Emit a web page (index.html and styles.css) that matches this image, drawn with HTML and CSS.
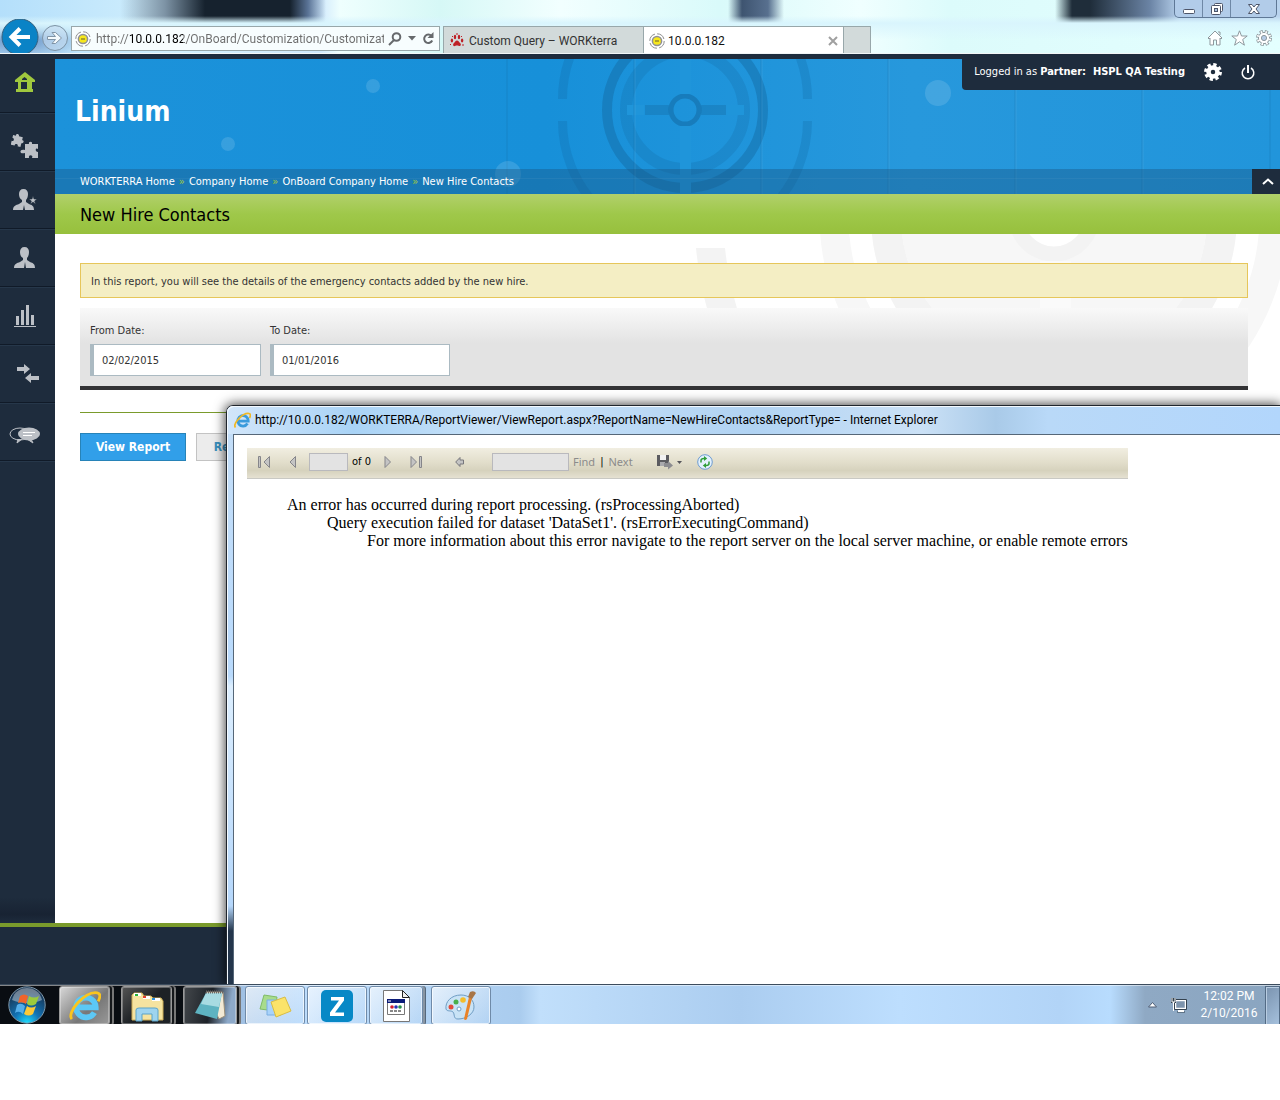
FILE: index.html
```html
<!DOCTYPE html>
<html lang="en">
<head>
<meta charset="utf-8">
<title>New Hire Contacts</title>
<link rel="stylesheet" href="styles.css">
</head>
<body>
<div class="desktop">
  <header class="chrome">
    <div class="window-buttons">
      <button aria-label="Minimize"><svg width="14" height="12" viewBox="0 0 14 12"><rect x="1.500" y="6.500" width="11" height="4" rx="1" fill="#fff" stroke="#4d5569"/></svg></button>
      <button aria-label="Restore"><svg width="14" height="14" viewBox="0 0 14 14" fill="#fff" stroke="#4d5569"><rect x="4.500" y="1.500" width="8" height="8" rx="1"/><rect x="1.500" y="3.500" width="9" height="9" rx="1"/><rect x="4.500" y="6.500" width="3" height="3" fill="#a9c3e0"/></svg></button>
      <button class="wide" aria-label="Close"><svg width="14" height="12" viewBox="0 0 14 12"><path d="M1.500 1.500h3.500l2 2.500 2-2.500h3.500L9 6l3.500 4.500H9L7 8l-2 2.500H1.500L5 6z" fill="#fff" stroke="#4d5569"/></svg></button>
    </div>
    <div class="nav-row">
      <button class="back" aria-label="Back"><svg width="40" height="36" viewBox="0 0 40 36"><circle cx="20" cy="18" r="18" fill="#0a83c6" stroke="#35617f"/><path d="M30 18H13M20 9.500L11.500 18l8.500 8.500" fill="none" stroke="#fff" stroke-width="4"/></svg></button>
      <button class="forward" aria-label="Forward"><svg width="28" height="28" viewBox="0 0 28 28"><circle cx="14" cy="14" r="12.500" fill="#c7dcf0" fill-opacity=".6" stroke="#7d93a5"/><path d="M6.500 12.500h8L11 8.500h3.500L20.500 14l-6 5.500H11l3.500-4h-8z" fill="#f4fafd" stroke="#8094a6"/></svg></button>
      <form class="address">
        <svg width="16" height="16" viewBox="0 0 16 16"><circle cx="8" cy="8" r="7.200" fill="#fff" stroke="#8b8b8b" stroke-dasharray="9 2.300"/><circle cx="8" cy="8" r="4.600" fill="#f6e71c" stroke="#8f9097" stroke-width="1.500"/><path d="M6 8h4" stroke="#94882a" stroke-width="1.500"/></svg>
        <input class="url" type="text" aria-label="Address" value="http://10.0.0.182/OnBoard/Customization/Customizati">
        <button type="button" aria-label="Search"><svg width="14" height="14" viewBox="0 0 14 14" fill="none" stroke="#66696c" stroke-width="2"><circle cx="8.500" cy="5" r="3.800"/><path d="M6 8l-5 5"/></svg></button>
        <button type="button" aria-label="Show suggestions"><svg width="8" height="5" viewBox="0 0 8 5"><path d="M0 0h8L4 4.500z" fill="#66696c"/></svg></button>
        <button type="button" aria-label="Refresh"><svg width="12" height="13" viewBox="0 0 12 13"><path d="M9.500 4A4.200 4.200 0 1 0 10.200 8.500" fill="none" stroke="#66696c" stroke-width="2"/><path d="M11.500 0v6H5.500z" fill="#66696c"/></svg></button>
      </form>
      <div class="tabs">
        <button class="tab"><svg width="14" height="15" viewBox="0 0 14 15" fill="#be2026"><path d="M7 7.500c1.500 0 2 1.500 3.500 3 1 1.500 0 3-1.500 2.500-1.500-.6-2.500-.6-4 0s-2.500-1-1.500-2.500C5 9 5.500 7.500 7 7.500z"/><ellipse cx="5" cy="4" rx="1.200" ry="2.200"/><ellipse cx="9" cy="4" rx="1.200" ry="2.200"/><ellipse cx="1.900" cy="7.500" rx="1.200" ry="1.900"/><ellipse cx="12.100" cy="7.500" rx="1.200" ry="1.900"/><path d="M6.500 0h1v2h-1zM2 3h1v1H2zM11 3h1v1h-1zM0 11h1v1H0zM12.500 11h1v2h-1z"/></svg><span>Custom Query – WORKterra</span></button>
        <button class="tab current"><svg width="16" height="16" viewBox="0 0 16 16"><circle cx="8" cy="8" r="7.200" fill="#fff" stroke="#8b8b8b" stroke-dasharray="9 2.300"/><circle cx="8" cy="8" r="4.600" fill="#f6e71c" stroke="#8f9097" stroke-width="1.500"/><path d="M6 8h4" stroke="#94882a" stroke-width="1.500"/></svg><span>10.0.0.182</span><svg class="tab-close" width="10" height="10" viewBox="0 0 10 10"><path d="M1 1l8 8M9 1L1 9" stroke="#a0a0a0" stroke-width="2"/></svg></button>
        <button class="tab new" aria-label="New tab"></button>
      </div>
      <div class="tools">
        <button aria-label="Home"><svg width="16" height="16" viewBox="0 0 16 16"><path d="M8 1l7 7-1 1-1-1v7H9.500v-5h-3v5H3V8L2 9 1 8zM11 2h2v3" fill="#fff" stroke="#8e999e"/></svg></button>
        <button aria-label="Favorites"><svg width="17" height="16" viewBox="0 0 17 16"><path d="M8.500.8l2 5.200h5.700l-4.500 3.500 1.700 5.700-4.900-3.400-4.900 3.400 1.700-5.700L.8 6h5.700z" fill="#fff" stroke="#8e999e"/></svg></button>
        <button aria-label="Tools"><svg width="16" height="16" viewBox="0 0 16 16"><circle cx="8" cy="8" r="6.200" fill="none" stroke="#8e999e" stroke-width="3.600" stroke-dasharray="3 1.870"/><circle cx="8" cy="8" r="5.600" fill="#fff" stroke="#8e999e"/><circle cx="8" cy="8" r="6" fill="none" stroke="#fff" stroke-width="2.600" stroke-dasharray="1.500 3.212" stroke-dashoffset="-.75"/><circle cx="8" cy="8" r="2.600" fill="#b5cbe6" stroke="#8e999e"/></svg></button>
      </div>
    </div>
  </header>

  <div class="app">
    <nav class="sidebar" aria-label="Main">
      <a class="high" href="#home" aria-label="Home"><svg width="20" height="20" viewBox="0 0 20 20" fill="#a0c83e" fill-rule="evenodd"><path d="M10 0l10 8v2h-3v7h1v3H1v-3h2v-7H0V8zM6 10v7h6v-7zM7 7v1h5V7l-2.500-2z"/></svg></a>
      <a class="low" href="#modules" aria-label="Modules"><svg width="28" height="26" viewBox="0 0 28 26" fill="#bcc0c6"><g transform="rotate(14 6 7)"><path d="M1 3h3c-1-2 3-3 3 0h4v3c2-1 3 3 0 3v4H8c1-2-3-3-3 0H1V9c2 1 3-3 0-3z"/></g><path d="M14 11h4c-1-3 4-3 3 0h6v5c-2-2-4 2 0 3v6h-6c2-3-4-4-3 0h-4v-5c-6 2-6-5 0-3z"/></svg></a>
      <a href="#partner" aria-label="Partner"><svg width="24" height="21" viewBox="0 0 24 21" fill="#bcc0c6"><path d="M10.500 0c3 0 4.500 2 4.500 5s-1 5-2 6v2l3 2c3 1 5 2 5 6h-9l-1-5-1 5H0c0-4 3-5 6-6l3-2v-2C7 10 6 8 6 5s1.500-5 4.500-5z"/><path d="M20 7l1 3h3l-2.400 2 1 3-2.600-2-2.600 2 1-3L16 10h3z" stroke="#1e2c3d" stroke-width=".5"/></svg></a>
      <a href="#employee" aria-label="Employee"><svg width="22" height="21" viewBox="0 0 22 21" fill="#bcc0c6"><path d="M10.500 0C13.500 0 15 2 15 5s-1 5-2 6v2l3 2c3 1 5 2 5 6h-9l-1-6-1 6H0c0-4 3-5 6-6l3-2v-2C7 10 6 8 6 5s1.500-5 4.500-5z"/></svg></a>
      <a href="#reports" aria-label="Reports"><svg width="22" height="22" viewBox="0 0 22 22" fill="#bcc0c6"><path d="M2 11h3v9H2zM7 5h3v15H7zM12 0h3v20h-3zM17 10h3v10h-3zM0 21h22v1H0z"/></svg></a>
      <a class="shift" href="#transfer" aria-label="Transfer"><svg width="22" height="19" viewBox="0 0 22 19" fill="#bcc0c6"><path d="M0 3h7V0l6 5-6 5V7H0zM22 12h-8V9l-6 5 6 5v-3h8z"/></svg></a>
      <a class="low" href="#messages" aria-label="Messages"><svg width="32" height="17" viewBox="0 0 32 17"><ellipse cx="11" cy="7" rx="10" ry="6" fill="none" stroke="#bcc0c6"/><path d="M9 12l-1 4 5-4M22 12l2 4-6-4z" fill="#bcc0c6" stroke="#bcc0c6"/><ellipse cx="20" cy="7" rx="11" ry="6.500" fill="#bcc0c6"/><path d="M14 5.500h12M14 8.500h9" stroke="#fff"/></svg></a>
    </nav>

    <main class="page">
      <div class="hero">
        <svg class="hero-art" width="1225" height="135" viewBox="55 59 1225 135" aria-hidden="true">
          <g fill="none" stroke="#12669d">
            <g stroke-opacity=".24" stroke-width="9">
              <path d="M562.500 99A122 122 0 0 1 807.500 99"/><path d="M562.500 121A122 122 0 0 0 807.500 121"/>
            </g>
            <circle cx="685" cy="110" r="59" stroke-opacity=".22" stroke-width="12"/>
            <circle cx="685" cy="110" r="78" stroke-opacity=".42" stroke-width="10"/>
            <path d="M645 110h24M701 110h25" stroke-opacity=".32" stroke-width="10"/>
            <circle cx="685" cy="110" r="14" stroke-opacity=".5" stroke-width="5"/>
          </g>
          <path d="M680 59h11v35h-11zM680 126h11v68h-11zM627 105h17v10h-17zM727 105h17v10h-17z" fill="#1f95da"/>
          <path d="M507 59v135M634 59v135M761 59v135M888 59v135M1015 59v135M1142 59v135M1270 59v135" stroke="#0e5f99" stroke-opacity=".25"/>
          <path d="M635 59v135M762 59v135M889 59v135M1016 59v135M1143 59v135M55 178.500h1225" stroke="#8fd0f5" stroke-opacity=".16"/>
          <g fill="#fff" fill-opacity=".13"><circle cx="373" cy="86" r="7"/><circle cx="228" cy="144" r="7"/><circle cx="508" cy="174" r="13"/><circle cx="938" cy="93" r="13"/></g>
        </svg>
        <div class="account">
          <span>Logged in as <b>Partner:&nbsp; HSPL QA Testing</b></span>
          <button aria-label="Settings"><svg width="18" height="18" viewBox="0 0 18 18"><circle cx="9" cy="9" r="7.200" fill="none" stroke="#fff" stroke-width="3.500" stroke-dasharray="3.200 2.455"/><circle cx="9" cy="9" r="4.500" fill="none" stroke="#fff" stroke-width="4.500"/></svg></button>
          <button aria-label="Log out"><svg width="14" height="16" viewBox="0 0 14 16" fill="none" stroke="#fff"><path d="M4 4a5.800 5.800 0 1 0 6 0" stroke-width="1.500"/><path d="M7 1v8" stroke-width="2"/></svg></button>
        </div>
        <h1>Linium</h1>
        <div class="crumbs">
          <nav aria-label="Breadcrumb"><a href="#w">WORKTERRA Home</a><i>»</i><a href="#c">Company Home</a><i>»</i><a href="#o">OnBoard Company Home</a><i>»</i><a href="#n">New Hire Contacts</a></nav>
          <button class="collapse" aria-label="Collapse header"><svg width="12" height="8" viewBox="0 0 12 8"><path d="M1 6l5-4.500L11 6" fill="none" stroke="#fff" stroke-width="2"/></svg></button>
        </div>
      </div>
      <h2>New Hire Contacts</h2>
      <section class="content">
        <svg class="content-art" width="600" height="156" viewBox="680 234 600 156" fill="none" aria-hidden="true">
          <circle cx="1054" cy="216" r="153" fill="#f7f7f7"/>
          <circle cx="1054" cy="216" r="168" stroke="#f3f3f3" stroke-width="30"/>
          <circle cx="1054" cy="216" r="220" stroke="#f7f7f7" stroke-width="29"/>
          <path d="M696 248a358 358 0 0 0 108 224l20-21A329 329 0 0 1 725 248z" fill="#f3f3f3"/>
          <circle cx="1054" cy="216" r="38" fill="#fff" stroke="#f3f3f3" stroke-width="15"/>
          <path d="M1040 261h31v129h-31z" fill="#fafafa"/>
        </svg>
        <p class="notice">In this report, you will see the details of the emergency contacts added by the new hire.</p>
        <form>
          <div class="filters">
            <label>From Date:<input type="text" value="02/02/2015"></label>
            <label>To Date:<input type="text" value="01/01/2016"></label>
          </div>
          <div class="actions">
            <button class="primary" type="button">View Report</button>
            <button class="secondary" type="reset">Reset</button>
          </div>
        </form>
      </section>
    </main>
    <footer></footer>

    <section class="popup" aria-label="Report viewer window">
      <div class="popup-title">
        <svg width="17" height="17" viewBox="0 0 34 34"><path d="M27 23a10.500 10.500 0 1 1 1.500-5H8" fill="none" stroke="#3a9bdc" stroke-width="5.500"/><path d="M3 31C-3 24 17 1 30 3c5 1 2 7 1 9" fill="none" stroke="#f0b824" stroke-width="3.500"/></svg>
        <span>http://10.0.0.182/WORKTERRA/ReportViewer/ViewReport.aspx?ReportName=NewHireContacts&amp;ReportType= - Internet Explorer</span>
      </div>
      <div class="popup-body">
        <div class="report">
          <div class="toolbar">
            <button aria-label="First page"><svg width="13" height="12" viewBox="0 0 13 12" fill="#c4c4c4" stroke="#85858a"><path d="M.5.500h2v11h-2zM11.500.500v11L6 6z"/></svg></button>
            <button aria-label="Previous page"><svg width="8" height="12" viewBox="0 0 8 12" fill="#c4c4c4" stroke="#85858a"><path d="M6.500.500v11L1 6z"/></svg></button>
            <input class="page-no" type="text" aria-label="Page number" disabled>
            <span class="of">of 0</span>
            <button aria-label="Next page"><svg width="8" height="12" viewBox="0 0 8 12" fill="#c4c4c4" stroke="#85858a"><path d="M1 .500v11L6.500 6z"/></svg></button>
            <button class="last" aria-label="Last page"><svg width="13" height="12" viewBox="0 0 13 12" fill="#c4c4c4" stroke="#85858a"><path d="M1 .500v11L6.500 6zM9.500.500h2v11h-2z"/></svg></button>
            <button class="parent" aria-label="Back to parent report"><svg width="10" height="12" viewBox="0 0 10 12"><path d="M.7 6L5 1.500V4h3.500v4H5v2.500z" fill="#c4c4c4" stroke="#77777c"/></svg></button>
            <input class="find" type="text" aria-label="Find text" disabled>
            <a class="find-link" href="#find">Find</a><span class="bar">|</span><a class="next-link" href="#next">Next</a>
            <button class="export" aria-label="Export"><svg width="26" height="16" viewBox="0 0 26 16"><path d="M0 1h12v8H9v3H0z" fill="#5b5b60"/><path d="M3 1h6v5H3z" fill="#f2f2f2"/><path d="M3 8h5v4H3z" fill="#a9a9ad"/><path d="M7 9h4V7l5 4.500-5 4V13H7z" fill="#8c8c90"/><path d="M20 7h5l-2.500 3z" fill="#55555a"/></svg></button>
            <button class="refresh" aria-label="Refresh report"><svg width="16" height="16" viewBox="0 0 16 16"><circle cx="8" cy="8" r="7.300" fill="#e3f1fd" stroke="#6d9bd0"/><path d="M4 8.500V6.500Q4 4.500 7 4.500M12 7.500v2q0 2-3 2" fill="none" stroke="#2f9e38" stroke-width="1.500"/><path d="M7 2l3.200 2.500L7 7zM9 9l-3.200 2.500L9 14z" fill="#2f9e38"/></svg></button>
          </div>
          <ul class="errors"><li>An error has occurred during report processing. (rsProcessingAborted)
            <ul><li>Query execution failed for dataset 'DataSet1'. (rsErrorExecutingCommand)
              <ul><li>For more information about this error navigate to the report server on the local server machine, or enable remote errors</li></ul></li></ul></li></ul>
        </div>
      </div>
    </section>
  </div>

  <footer class="taskbar">
    <button class="start" aria-label="Start"><svg width="38" height="38" viewBox="0 0 38 38"><defs><radialGradient id="orb" cx=".5" cy="1" r=".9"><stop offset="0" stop-color="#1fe0ff"/><stop offset=".4" stop-color="#1273b5"/><stop offset="1" stop-color="#17324f"/></radialGradient></defs><circle cx="19" cy="19" r="18.200" fill="url(#orb)" stroke="#7f98aa"/><path d="M4 14C6 5 13 2 19 2s13 3 15 12c-7 4-22 4-30 0z" fill="#fff" fill-opacity=".38"/><path d="M12 10q4-3 8 0l-2 8q-4-3-8-1z" fill="#f0642a"/><path d="M21 10q5 3 10 0l-3 8q-5 3-9 0z" fill="#9ccb3b"/><path d="M9 19q4-3 8 1l-2 8q-4-4-8-1z" fill="#54aeea"/><path d="M19 20q4 3 9 0l-3 8q-4 3-9 0z" fill="#fcc937"/></svg></button>
    <button class="task dark lit grouped" aria-label="Internet Explorer"><svg width="32" height="32" viewBox="0 0 34 34"><path d="M27 24a10.500 10.500 0 1 1 1.500-5.500H8" fill="none" stroke="#5cc8f5" stroke-width="6"/><path d="M3 31C-3 24 17 1 30 3c5 1 2 7 1 9" fill="none" stroke="#fac51e" stroke-width="3"/></svg></button>
    <button class="task dark grouped" aria-label="Explorer"><svg width="34" height="32" viewBox="0 0 34 32"><path d="M2 30V5l2-2h8l2 3h7l2 2h8l2 3v19z" fill="#f5e3a0" stroke="#c9ab56"/><path d="M4 3h7v3H4zM13 6h7v3h-7zM22 8h8v3h-8z" fill="#fff"/><path d="M5 4h3v2H5z" fill="#27b43a"/><path d="M13 6h3v2h-3z" fill="#e5402f"/><path d="M22 8h3v2h-3z" fill="#2a8fe0"/><path d="M6 31V20q0-2 3-2h16q3 0 3 2v11h-6v-7H12v7z" fill="#9ed4ef" stroke="#5aa3c8"/></svg></button>
    <button class="task dark edge grouped" aria-label="Notepad"><svg width="34" height="32" viewBox="0 0 34 32"><path d="M13 2h17l2 24-6 3z" fill="#f3ead5" stroke="#9c8f78"/><path d="M13 3h16l-5 26-22-6z" fill="#5eb3c1"/><path d="M13 3h16l-3 14-18-3z" fill="#a8dbe2"/><path d="M13 2h17" stroke="#666" stroke-width="3" stroke-dasharray="1 1"/></svg></button>
    <button class="task" aria-label="Sticky Notes"><svg width="34" height="28" viewBox="0 0 34 28"><path d="M6 3l13 2-2 14L2 17z" fill="#a8dc8c" stroke="#80bc68"/><path d="M9 8h14v15H9z" fill="#a9d3fa" stroke="#7aaee2"/><path d="M13 10l14-5 6 14-15 6z" fill="#fbe36a" stroke="#d9bd45"/></svg></button>
    <button class="task" aria-label="Zoho"><svg width="32" height="32" viewBox="0 0 32 32"><rect width="32" height="32" rx="5" fill="#0788c6"/><path d="M10 7h13v3.500L14 22.500h9V26H9v-3.500l9-12h-8z" fill="#fff"/></svg></button>
    <button class="task grouped" aria-label="Script document"><svg width="27" height="32" viewBox="0 0 27 32"><path d="M.5.500h19l7 7v24H.5z" fill="#fff" stroke="#777"/><path d="M19.500.500v7h7z" fill="#eee" stroke="#222"/><path d="M4.500 9.500h17v15h-17z" fill="#fff" stroke="#777"/><path d="M4 9h18v4H4z" fill="#0b1b78"/><path d="M5 11h3" stroke="#fff"/><circle cx="9" cy="17" r="1.800" fill="#d3202f"/><circle cx="13" cy="17" r="1.800" fill="#2835b5"/><circle cx="17" cy="17" r="1.800" fill="#27924b"/><path d="M7 21h12" stroke="#111" stroke-dasharray="3 1"/></svg></button>
    <button class="task" aria-label="Paint"><svg width="34" height="32" viewBox="0 0 34 32"><path d="M17 5C7 5 1 12 2 19c1 3 5 1 7 3s0 7 5 7c8 0 16-5 16-12S25 5 17 5z" fill="#c9e3f6" stroke="#6f9dc4"/><circle cx="7" cy="17" r="2.500" fill="#e24a3b"/><circle cx="12" cy="12" r="2.500" fill="#49ae4a"/><circle cx="19" cy="10" r="2.800" fill="#f3bd2b"/><circle cx="15" cy="19" r="2" fill="#fff" stroke="#6f9dc4"/><path d="M28 8l-5 21q-2 2-3 0l5-22z" fill="#e98329"/><path d="M24 7l2-5q4-2 6 1l-4 6z" fill="#a87546"/></svg></button>
    <div class="tray">
      <button aria-label="Show hidden icons"><svg width="9" height="6" viewBox="0 0 9 6"><path d="M4.500.500l4 4.500h-8z" fill="#fff" stroke="#4d5d75"/></svg></button>
      <button aria-label="Network"><svg width="17" height="16" viewBox="0 0 17 16"><path d="M5.500 3.500h10v8h-10z" fill="#7c93ac" stroke="#fff" stroke-width="1.500"/><path d="M4.500 2.500h12v10h-12zM7 15h8" fill="none" stroke="#34424f"/><path d="M8 14h6" stroke="#fff" stroke-width="2"/><path d="M1 1h5v5H1z" fill="#34424f"/><path d="M2 1v4h3V1M3.500 5v9" fill="none" stroke="#fff"/></svg></button>
      <time class="clock"><span>12:02 PM</span><span>2/10/2016</span></time>
      <button class="show-desktop" aria-label="Show desktop"></button>
    </div>
  </footer>
</div>
</body>
</html>
```
FILE: styles.css
```css
* { box-sizing: border-box; }
body { margin: 0; background: #fff; color: #333; font: 11px/14px "DejaVu Sans Condensed", "Noto Sans", sans-serif; }
button { margin: 0; padding: 0; border: 0; background: none; font: inherit; color: inherit; }
input { font: inherit; color: inherit; }
a { color: inherit; text-decoration: none; }
svg { display: block; flex: none; }
h1, h2, p, ul { margin: 0; padding: 0; }

.desktop { display: flex; flex-direction: column; min-height: 1024px; }

/* Browser window frame */
.chrome {
  position: relative;
  height: 54px;
  padding-top: 18px;
  overflow: hidden;
  border-bottom: 1px solid #f2f6f7;
  font: 12px/16px Roboto, "Noto Sans", sans-serif;
  background:
    linear-gradient(transparent 16px, #d9f5fd 23px, transparent 40px),
    linear-gradient(90deg, transparent 120px, #7d93a5 165px, #16222e 205px 290px, #5a7396 308px, transparent 326px) 0 0 / 100% 23px no-repeat,
    linear-gradient(90deg, transparent 728px, #3e5470 742px, #58708f 768px, transparent 784px) 0 0 / 100% 23px no-repeat,
    linear-gradient(90deg, transparent 1055px, #1f2d3a 1072px 1090px, #6b84a5 1150px, #b9d3ee 1180px) 0 0 / 100% 23px no-repeat,
    radial-gradient(70px 22px at 20px 40px, #6a92c4, transparent),
    linear-gradient(90deg, #b4dffb, #d3f0fd 180px, #d0e9fc 320px, #effffe 340px, #d6f8f6 440px, #f2ffff 560px, #d9fafa 720px, #f0ffff 860px, #dcfbfb 950px, #e4ffff);
}
.window-buttons { position: absolute; top: 0; right: 3px; display: flex; border: 1px solid #5f7896; border-top: 0; border-radius: 0 0 5px 5px; background: #b2cce9; }
.window-buttons button { display: grid; place-items: center; width: 28px; height: 17px; border-right: 1px solid #6f88a6; }
.window-buttons .wide { width: 45px; border: 0; }
.nav-row { display: flex; align-items: flex-start; }
.back { margin-top: 1px; }
.forward { margin: 6px 2px 0 1px; }
.address { display: flex; align-items: center; gap: 6px; width: 369px; height: 25px; margin-top: 8px; padding: 0 5px 0 3px; border: 1px solid #98a7aa; background: #f7fdfe; }
.url {
  flex: 1;
  min-width: 0;
  height: 20px;
  margin: 0 -2px 0 -1px;
  padding: 0;
  border: 0;
  color: transparent;
  font-size: 12px;
  background: linear-gradient(90deg, #6d6d6d 34px, #000 34px 87px, #6d6d6d 87px);
  background-clip: text;
  -webkit-background-clip: text;
}
.tabs { display: flex; margin: 8px 0 0 3px; }
.tab { display: flex; align-items: center; gap: 5px; width: 200px; height: 28px; padding: 0 6px; border: 1px solid #98a7aa; border-right: 0; border-bottom: 0; background: #d2dada; color: #333; white-space: nowrap; }
.tab.current { background: #fff; color: #111; gap: 3px; padding: 0 5px; }
.tab.new { width: 28px; border-right: 1px solid #98a7aa; }
.tab-close { margin-left: auto; }
.tools { display: flex; gap: 8px; margin: 12px 8px 0 auto; }

/* Application */
.app { position: relative; display: grid; grid-template: 1fr 61px / 55px 1fr; flex: 1; background: #1e2c3d; }
.app > footer { grid-column: 1 / -1; border-top: 4px solid #7a9b2c; }
.sidebar { padding-top: 1px; background: linear-gradient(transparent 97%, #182333 99%, transparent); }
.sidebar a { display: grid; place-items: center; height: 58px; padding-right: 5px; border-bottom: 1px solid #101a28; box-shadow: 0 1px #26374a; }
.sidebar .high { padding-bottom: 4px; }
.sidebar .low { padding-top: 8px; }
.sidebar .shift { padding: 0; }
.page { min-width: 0; padding-top: 5px; background: linear-gradient(#1e2c3d 5px, #fff 5px); }

.hero { position: relative; display: flex; flex-direction: column; height: 135px; overflow: hidden; background: linear-gradient(90deg, #1c92da, #1790d9 40%, #2798dc 70%, #2195db); color: #fff; }
.hero-art { position: absolute; top: 0; left: 0; }
.account { position: absolute; top: 0; right: 0; display: flex; align-items: center; height: 31px; padding: 0 25px 6px 12px; border-radius: 0 0 0 4px; background: #1e2c3d; white-space: nowrap; }
.account button { margin-left: 19px; }
.hero h1 { position: relative; flex: 1; padding: 36px 20px 0; font: bold 28px/34px "DejaVu Sans Condensed", sans-serif; }
.crumbs { position: relative; display: flex; justify-content: space-between; height: 25px; padding-left: 25px; background: rgba(24, 85, 130, .4); line-height: 26px; white-space: nowrap; }
.crumbs i { margin: 0 4px; color: #a0c83e; font-style: normal; }
.collapse { display: grid; place-items: center; width: 28px; background: #1e2c3d; padding-left: 4px; }
.page h2 { height: 40px; padding: 0 25px; background: linear-gradient(#b1d06b, #9fc84a 50%, #97c03d); color: #000; font: 18px/42px "DejaVu Sans Condensed", sans-serif; }

.content { position: relative; padding: 29px 32px 32px 25px; }
.content-art { position: absolute; top: 0; right: 0; }
.notice { position: relative; height: 35px; padding: 0 10px; border: 1px solid #e6c65a; background: #f4eec4; line-height: 35px; }
.filters { position: relative; display: flex; gap: 9px; height: 82px; margin-top: 10px; padding: 16px 10px 0; border-bottom: 4px solid #333335; background: linear-gradient(#f9f9f9, #e3e3e3 45%); }
.filters label { display: flex; flex-direction: column; gap: 6px; width: 171px; }
.filters label + label { width: 180px; }
.filters input { height: 32px; padding: 0 8px; border: 1px solid #abbac2; border-left-width: 4px; background: #fff; }
.actions { display: flex; gap: 10px; margin-top: 22px; padding-top: 20px; border-top: 1px solid #7a9b2c; }
.actions button { width: 106px; height: 28px; border: 1px solid #2783b8; background: #319fe9; color: #fff; font: bold 12px/16px "DejaVu Sans Condensed", sans-serif; }
.actions .secondary { width: 70px; border-color: #c3c3c3; background: #ececec; color: #3a8fbd; }

/* Report viewer window, above the application */
.popup {
  position: absolute;
  inset: 351px 0 0 226px;
  display: flex;
  flex-direction: column;
  padding-left: 6px;
  border: 1px solid #20262e;
  border-width: 1px 0 0 1px;
  border-radius: 7px 0 0 0;
  background: linear-gradient(#c4def8, #b9dafc 270px, #dceefe 280px, #b5d7fb 500px, #24364c 525px);
  box-shadow: inset 1px 1px #f4faff, 0 0 12px 1px rgba(0, 0, 0, .75);
}
.popup-title { display: flex; align-items: center; gap: 4px; height: 28px; margin-left: -6px; padding-left: 7px; border-radius: 6px 0 0 0; background: linear-gradient(90deg, #d2e6fa, #a9d3f6 12%, #c9e2f8 25%, #b1d3f3 50%, #cbe1f6 66%, #a9cae8 73%, #b9d9f8 78%, #b2d6fc); box-shadow: inset 1px 1px #f4faff; color: #000; font: 12px/16px Roboto, "Noto Sans", sans-serif; white-space: nowrap; }
.popup-body { flex: 1; padding: 13px; border: 1px solid #566778; border-width: 1px 0 0 1px; background: #fff; }
.report { display: inline-block; }
.toolbar { display: flex; align-items: center; height: 31px; padding: 0 11px 3px; border-bottom: 1px solid #c9c9c4; background: linear-gradient(#f1eee1, #e1ddca 50%, #d6d2bd 75%, #e5e1d2); color: #000; font: 11px/14px "DejaVu Sans Condensed", sans-serif; }
.toolbar button { margin-right: 18px; }
.toolbar input { height: 18px; padding: 0; border: 1px solid #b9b9bd; background: #e3e3e3; }
.toolbar .page-no { width: 39px; margin-right: 4px; margin-left: -6px; }
.toolbar .of { width: 32px; }
.toolbar .last { margin-right: 32px; }
.toolbar .parent { margin-right: 27px; }
.toolbar .find { width: 77px; margin-right: 4px; }
.toolbar a { color: #8b8b8b; font-family: "Noto Sans", sans-serif; }
.toolbar .bar { margin: 0 5px; }
.toolbar .export { margin: 0 14px 0 24px; }
.errors { margin-top: 17px; color: #000; font: 16px/18px "Liberation Serif", serif; list-style: none; white-space: nowrap; padding-left: 40px; }
.errors ul { padding-left: 40px; list-style: none; }

/* Taskbar */
.taskbar {
  position: relative;
  display: flex;
  height: 40px;
  padding: 1px 0 0 8px;
  border-top: 1px solid #3c4c5d;
  background: linear-gradient(90deg, #090d12 205px, #9fbfe2 240px, #bcdcfc 300px, #aaccee 520px, #c1dffb 540px, #abcdf0 740px, #bddefe 900px, #b2d4f7 1060px, #b8dcfe 1110px, #8fa9c4 1145px, #8aa5c0);
  box-shadow: inset 0 1px rgba(255, 255, 255, .5);
}
.start { width: 38px; margin-right: 13px; }
.task { display: grid; place-items: center; width: 60px; height: 39px; margin-right: 2px; border: 1px solid #6f8aa8; border-radius: 3px; background: linear-gradient(135deg, rgba(255, 255, 255, .65), rgba(190, 220, 250, .3)); box-shadow: inset 0 0 0 1px rgba(255, 255, 255, .65); }
.grouped { width: 54px; margin-right: 8px; box-shadow: inset 0 0 0 1px rgba(255, 255, 255, .5), 2px 0 rgba(255, 255, 255, .3), 3px 0 #55687c; }
.task.dark { width: 51px; margin-right: 11px; border-color: #999; background: linear-gradient(135deg, #555, #1d2125 50%); box-shadow: inset 0 0 0 1px rgba(255, 255, 255, .3), 2px 0 #15181b, 4px 0 #777; }
.task.lit { background: linear-gradient(135deg, #d8d8d8, #777 60%, #999); }
.task.edge { width: 54px; margin-right: 8px; background: linear-gradient(100deg, #44484c, #1d2228 50%, #8da9c9 85%); }
.tray { display: flex; align-items: center; gap: 13px; margin-left: auto; color: #fff; font: 12px/17px Roboto, "Noto Sans", sans-serif; }
.clock { display: flex; flex-direction: column; align-items: center; min-width: 58px; white-space: nowrap; }
.show-desktop { width: 15px; height: 39px; margin-left: -6px; border: 1px solid #536b85; background: linear-gradient(135deg, #7a93af, #a5c0dc); box-shadow: inset 1px 1px #b9cde2; }
```
